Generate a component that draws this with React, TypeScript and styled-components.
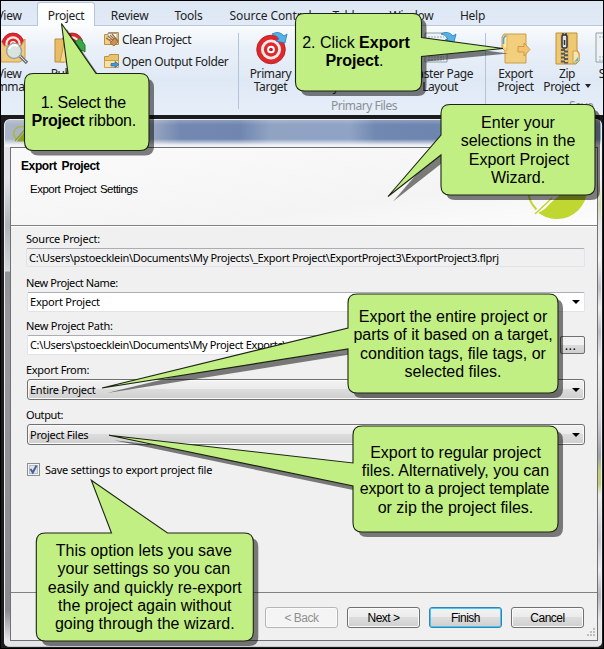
import React from "react";
import styled, { createGlobalStyle } from "styled-components";

const GlobalStyle = createGlobalStyle`
  * { box-sizing: border-box; }
  html, body { margin: 0; padding: 0; overflow: hidden; }
`;

const ribbonFont = `"Noto Sans", "Open Sans", sans-serif`;
const dialogFont = `"Noto Sans", "Open Sans", sans-serif`;
const calloutFont = `"Liberation Sans", Arial, sans-serif`;

const Screen = styled.div`
  position: relative;
  width: 604px;
  height: 649px;
  overflow: hidden;
  background: #1c1c1e;
  border: 1px solid #000;
  display: flex;
  flex-direction: column;
`;

/* ---------- Ribbon ---------- */

const TabBar = styled.nav`
  flex: none;
  height: 25px;
  display: flex;
  align-items: stretch;
  background: linear-gradient(#dde7f4, #e1eaf6);
  border-bottom: 1px solid #b8c9e0;
  font: 12px/30px ${ribbonFont};
  color: #1e1e1e;
`;

const Tab = styled.span<{ $w: number; $ls?: number; $active?: boolean; $shift?: number }>`
  flex: none;
  width: ${(p) => p.$w}px;
  text-align: center;
  text-indent: ${(p) => p.$shift ?? 0}px;
  white-space: nowrap;
  letter-spacing: ${(p) => p.$ls ?? -0.25}px;
  ${(p) =>
    p.$active &&
    `background: linear-gradient(#fff, #fbfcfe);
     border: 1px solid #b4c6de; border-bottom: 0; border-radius: 3px 3px 0 0;
     margin-top: 1px; height: 24px; line-height: 26px; letter-spacing: -0.4px;`}
`;

const RibbonBody = styled.div`
  flex: none;
  height: 89px;
  display: flex;
  padding-top: 7px;
  background: linear-gradient(#fafcfe 0, #e9f0f8 22px, #dfe9f5 54px, #e4edf8 80px, #e6eef7);
  font: 12px/13px ${ribbonFont};
  color: #222;
  overflow: hidden;
`;

const Group = styled.div<{ $w: number }>`
  flex: none;
  width: ${(p) => p.$w}px;
  height: 76px;
  border-right: 1px solid #b3c3d8;
  display: flex;
  flex-direction: column;
  &:last-child { border-right: 0; }
`;

const Tools = styled.div`
  flex: none;
  display: flex;
  height: 65px;
`;

const Tool = styled.div<{ $w: number; $shift?: number }>`
  flex: none;
  width: ${(p) => p.$w}px;
  margin-left: ${(p) => p.$shift ?? 0}px;
  display: flex;
  flex-direction: column;
  align-items: center;
  text-align: center;
  white-space: nowrap;
  letter-spacing: -0.4px;
  svg { flex: none; margin: -2px 0 2px; }
`;

const ToolList = styled.div`
  display: flex;
  flex-direction: column;
  margin-left: 4px;
`;

const ListTool = styled.div<{ $ls: number }>`
  display: flex;
  align-items: center;
  gap: 2px;
  height: 22px;
  margin-top: -5px;
  margin-bottom: 5px;
  letter-spacing: ${(p) => p.$ls}px;
  white-space: nowrap;
`;

const GroupName = styled.div<{ $pad?: number }>`
  line-height: 15px;
  padding-left: ${(p) => p.$pad ?? 0}px;
  color: #8b9097;
  letter-spacing: -0.5px;
`;

const Caret = styled.i`
  display: inline-block;
  border: 3px solid transparent;
  border-top: 4px solid #222;
  border-bottom: 0;
  margin: 0 0 3px 5px;
`;

/* ---------- Wizard window ---------- */

const WizardWindow = styled.section`
  flex: none;
  margin: 4px 0 0 3px;
  width: 598px;
  height: 528px;
  border-radius: 6px 6px 5px 5px;
  padding: 0 5px 6px 5px;
  border: 1px solid #e9edf3;
  border-bottom-color: #c9c9cc;
  background:
    linear-gradient(180deg, transparent 0 26px, #e3e3e5 26px 60px, #b1b4b8 105px, #d5d6d8 150px, #dedede 151px, #929396 152px, #9a9a9c 210px, #8b8b8e 490px, #e5e5e8 520px) 0 0 / 7px 100% no-repeat,
    linear-gradient(180deg, transparent 0 26px, #f4f4f4 26px 60px, #d7dbae 84px, #e8e8e8 108px, #f2f2f4 140px, #c4c4c8 168px, #efeff1 188px, #c0c0c5 212px, #eeeef0 240px, #d2d2d5 300px, #a2a3a8 336px, #c4cd75 352px, #c4cd75 364px, #ececee 375px, #c9c9cd 420px, #ededf0 450px, #b7b7bc 475px, #e7e7ea 500px) 100% 0 / 6px 100% no-repeat,
    #e5e5e8;
  overflow: hidden;
`;

const TitleBar = styled.header`
  height: 27px;
  margin: 0 -5px;
  padding: 5px 0 0 7px;
  background:
    linear-gradient(180deg, rgba(255,255,255,.2) 0, transparent 5px, transparent 19px, rgba(250,250,252,.9) 25px, #f4f4f5 27px),
    linear-gradient(90deg, #aab5c7 0, #9facc2 110px, #9caac2 145px, #7388b1 175px, #7086b0 235px, #90a3c3 265px, #8fa3c4 345px, #7188b1 370px, #6d85af 430px, #8ca0c3 520px, #91a5c6 100%);
`;

const Content = styled.div`
  height: 494px;
  width: 588px;
  border: 1px solid #707173;
  background: #f0f0f0;
  display: flex;
  flex-direction: column;
  font: 11px/14px ${dialogFont};
  color: #000;
`;

const PageHeader = styled.div`
  flex: none;
  height: 78px;
  display: flex;
  justify-content: space-between;
  border-bottom: 1px solid #808183;
  box-shadow: 0 1px #fff;
  background: linear-gradient(172deg, #f9f9f9 20%, #f4f4f4 65%, #fdfdfd);
  font-family: ${calloutFont};
  overflow: hidden;
  svg { margin: 16px 9px 0 0; flex: none; }
`;

const PageTitle = styled.h1`
  margin: 11px 0 0 10px;
  font: bold 12px/14px ${calloutFont};
  letter-spacing: -0.4px;
  word-spacing: 2px;
`;

const PageSubtitle = styled.p`
  margin: 9px 0 0 19px;
  font-size: 11.5px;
  line-height: 14px;
  letter-spacing: -0.5px;
  word-spacing: 1px;
`;

const Form = styled.div`
  flex: none;
  height: 366px;
  padding: 0 12px 0 16px;
`;

const Label = styled.label<{ $h: number; $ls?: number }>`
  display: flex;
  align-items: flex-end;
  height: ${(p) => p.$h}px;
  padding-bottom: 2px;
  margin-left: -1px;
  letter-spacing: ${(p) => p.$ls ?? -0.15}px;
`;

const Box = styled.div<{ $kind: "readonly" | "text" | "combo"; $ls?: number }>`
  display: flex;
  align-items: center;
  justify-content: space-between;
  flex: 1;
  height: ${(p) => (p.$kind === "combo" ? 21 : p.$kind === "text" ? 20 : 19)}px;
  padding: 0 5px 0 2px;
  white-space: nowrap;
  letter-spacing: ${(p) => p.$ls ?? -0.15}px;
  border-radius: 2px;
  border: 1px solid #e2e3ea;
  border-top-color: #abadb3;
  background: ${(p) => (p.$kind === "text" ? "#fff" : "#f0f0f0")};
  ${(p) =>
    p.$kind === "readonly" && `margin-left: -1px;`}
  ${(p) =>
    p.$kind === "combo" &&
    `border: 1px solid #707070; border-radius: 3px; box-shadow: inset 0 0 0 1px #fafafa;
     background: linear-gradient(#f2f2f2 0, #ebebeb 50%, #dcdcdc 50%, #cfcfcf);`}
`;

const DropArrow = styled.i`
  border: 4px solid transparent;
  border-top: 4px solid #000;
  border-bottom: 0;
  margin-right: -1px;
`;

const Row = styled.div`
  display: flex;
`;

const BrowseButton = styled.button`
  width: 25px;
  height: 18px;
  margin: 1px 0 0 5px;
  padding: 0 4px 0 0;
  border: 1px solid #707070;
  border-radius: 2px;
  background: linear-gradient(#f2f2f2 50%, #dcdcdc 50%, #cfcfcf);
  font: 13px/14px ${dialogFont};
  letter-spacing: 0.3px;
`;

const CheckRow = styled.div`
  display: flex;
  align-items: center;
  gap: 5px;
  margin-top: 18px;
  height: 13px;
  letter-spacing: -0.23px;
`;

const Footer = styled.footer`
  flex: 1;
  display: flex;
  justify-content: flex-end;
  align-items: flex-start;
  gap: 9px;
  padding: 14px 0 0;
  border-top: 1px solid #808183;
`;

const Button = styled.button<{ $state?: "disabled" | "default" }>`
  width: 73px;
  height: 21px;
  padding: 0;
  border: 1px solid #707070;
  border-radius: 3px;
  box-shadow: inset 0 0 0 1px #fbfbfb;
  background: linear-gradient(#f3f3f3, #ebebeb 50%, #dddddd 50%, #cfcfcf);
  font: 12px/18px ${calloutFont};
  letter-spacing: -0.5px;
  color: #000;
  ${(p) => p.$state === "disabled" && `border-color: #b5b5b5; background: #f4f4f4; color: #909090;`}
  ${(p) => p.$state === "default" && `border-color: #3c7fb1; box-shadow: inset 0 0 0 1px #3fc9f4;`}
`;

const Grip = styled.div`
  align-self: flex-end;
  width: 4px;
  height: 12px;
  svg { display: block; margin-left: -6px; }
`;

/* ---------- Callouts ---------- */

const CalloutLayer = styled.div`
  position: absolute;
  left: -1px;
  top: -1px;
  width: 604px;
  height: 649px;
`;

const CalloutShapes = styled.svg`
  position: absolute;
  inset: 0;
`;

const CalloutText = styled.div<{ $x: number; $y: number; $w: number }>`
  position: absolute;
  left: ${(p) => p.$x}px;
  top: ${(p) => p.$y}px;
  width: ${(p) => p.$w}px;
  font: 16px/18.35px ${calloutFont};
  color: #000;
  text-align: center;
`;

const Line = styled.div<{ $ls?: number; $dx?: number }>`
  white-space: nowrap;
  letter-spacing: ${(p) => p.$ls ?? 0}px;
  text-indent: ${(p) => p.$dx ?? 0}px;
`;

type Side = "top" | "left" | "right";
interface Bubble {
  x: number; y: number; r: number; b: number;
  side: Side; from: number; to: number; tip: [number, number];
}

const bubblePath = ({ x, y, r, b, side, from, to, tip }: Bubble) => {
  const c = 9;
  const t = `L${tip[0]} ${tip[1]}`;
  return [
    `M${x + c} ${y}`,
    side === "top" ? `H${from}${t}L${to} ${y}` : "",
    `H${r - c}Q${r} ${y} ${r} ${y + c}`,
    side === "right" ? `V${from}${t}L${r} ${to}` : "",
    `V${b - c}Q${r} ${b} ${r - c} ${b}H${x + c}Q${x} ${b} ${x} ${b - c}`,
    side === "left" ? `V${to}${t}L${x} ${from}` : "",
    `V${y + c}Q${x} ${y} ${x + c} ${y}Z`,
  ].join("");
};

interface CalloutData {
  bubble: Bubble;
  textTop: number;
  lines: { text: React.ReactNode; ls?: number; dx?: number }[];
}

const callouts: CalloutData[] = [
  {
    bubble: { x: 24.5, y: 73.5, r: 149, b: 150.5, side: "top", from: 68, to: 96, tip: [61.5, 23.5] },
    textTop: 94,
    lines: [{ text: "1. Select the", ls: -0.3, dx: -7 }, { text: <><b>Project</b> ribbon.</>, ls: -0.2, dx: -6 }],
  },
  {
    bubble: { x: 295.5, y: 13.5, r: 421.5, b: 91, side: "right", from: 37.5, to: 56.5, tip: [503, 48.5] },
    textTop: 34,
    lines: [{ text: <>2. Click <b>Export</b></>, dx: -5 }, { text: <><b>Project</b>.</>, ls: -0.1, dx: -8 }],
  },
  {
    bubble: { x: 441, y: 104.5, r: 595, b: 195, side: "left", from: 135, to: 155, tip: [388, 196.5] },
    textTop: 114,
    lines: [
      { text: "Enter your" }, { text: "selections in the" },
      { text: "Export Project", dx: 2 }, { text: "Wizard." },
    ],
  },
  {
    bubble: { x: 348, y: 294, r: 558, b: 393, side: "left", from: 328, to: 349, tip: [102, 388] },
    textTop: 308,
    lines: [
      { text: "Export the entire project or" }, { text: "parts of it based on a target," },
      { text: "condition tags, file tags, or" }, { text: "selected files." },
    ],
  },
  {
    bubble: { x: 353, y: 426, r: 558, b: 532, side: "left", from: 463, to: 486, tip: [109, 435.3] },
    textTop: 443.5,
    lines: [
      { text: "Export to regular project" }, { text: "files. Alternatively, you can" },
      { text: "export to a project template", ls: -0.15, dx: -2 }, { text: "or zip the project files." },
    ],
  },
  {
    bubble: { x: 36.3, y: 533, r: 253.3, b: 641, side: "top", from: 111.5, to: 167.5, tip: [91.3, 480.3] },
    textTop: 542,
    lines: [
      { text: "This option lets you save", dx: -2 }, { text: "your settings so you can", dx: -2 },
      { text: "easily and quickly re-export" }, { text: "the project again without" },
      { text: "going through the wizard." },
    ],
  },
];

/* ---------- Icons ---------- */

const Rings = ({ cx, cy, r }: { cx: number; cy: number; r: number }) => (
  <>
    <circle cx={cx} cy={cy} r={r} fill="#e0282c" stroke="#a8181c" strokeWidth=".8" />
    <circle cx={cx} cy={cy} r={r * 0.7} fill="#fbe9e8" />
    <circle cx={cx} cy={cy} r={r * 0.5} fill="#dc2b2e" />
    <circle cx={cx} cy={cy} r={r * 0.27} fill="#fff" />
    <circle cx={cx} cy={cy} r={r * 0.13} fill="#c41b20" />
  </>
);

const ViewSummaryIcon = () => (
  <svg width="32" height="34" viewBox="-6 0 32 34" overflow="visible">
    <Rings cx={14} cy={13} r={11} />
    <path d="M1 8l4 7h17l4-7v19l-5 4H2z" fill="#f0cb7b" stroke="#c99d4c" />
    <path d="m21 25 7 7" stroke="#75777d" strokeWidth="3.5" />
    <path d="m21 25 6 6" stroke="#d9dbe0" strokeWidth="1" />
    <circle cx="15" cy="20" r="7.5" fill="#d9e3df" stroke="#9fa29e" strokeWidth="1.5" />
    <path d="M10 18q3-6 9-3" stroke="#fff" strokeWidth="2" fill="none" />
  </svg>
);

const PublishIcon = () => (
  <svg width="32" height="34" viewBox="0 0 32 34">
    <Rings cx={18} cy={13} r={11} />
    <path d="M1 8h9v23H1z" fill="#e9bd66" stroke="#b98c3d" />
    <path d="M10 12h18v16l-4 3H6z" fill="#f6d98f" stroke="#c89c4c" />
    <path d="m20 12 6-5 5 7v7l-3-2-2 2-3-6-3 2z" fill="#39a845" stroke="#217c2d" />
  </svg>
);

const TargetIcon = () => (
  <svg width="36" height="34" viewBox="0 0 36 34">
    <Rings cx={18} cy={18.5} r={14.3} />
    <path d="M19 3q7-4 12 2l3-2-2 9-9-2 3-2q-3-5-7-5z" fill="#57b1e6" stroke="#237cb8" strokeWidth=".8" />
  </svg>
);

const LayoutIcon = () => (
  <svg width="34" height="34" viewBox="0 0 34 34">
    <path d="M2 2h22v29H2z" fill="#eef2f5" stroke="#8ba0a9" />
    <path d="M5 6h16M5 26h16M5 29h16" stroke="#9aacb3" strokeDasharray="2 1" />
    <path d="M18 3q7-4 12 2l3-2-2 8-9-2 3-1q-3-5-7-5z" fill="#57b1e6" stroke="#237cb8" strokeWidth=".8" />
  </svg>
);

const ExportIcon = () => (
  <svg width="34" height="34" viewBox="0 0 34 34">
    <path d="M5 3h22v29H6V20L3 17V6z" fill="#f2cf7d" stroke="#c99d4c" />
    <path d="M4 5h4v12l-3-1z" fill="#fbe8b3" />
    <path d="M4.5 13V9q0-4 3-4" stroke="#4aa9e0" strokeWidth="1.6" fill="none" />
    <path d="M8 3v16l-2 2" stroke="#dcb25d" fill="none" />
    <path d="M19 15.5h6V12l6 6.5-6 6.5v-4h-6z" fill="#f3c46d" stroke="#cf9442" strokeWidth=".9" />
  </svg>
);

const ZipIcon = () => (
  <svg width="30" height="34" viewBox="0 0 30 34">
    <path d="M4 2h21v17l2 3v8l-3 3H4z" fill="#efc972" stroke="#bd913f" />
    <path d="M21 20h4l2 3v7l-3 2h-3z" fill="#fae6ae" stroke="#c99d4c" />
    <path d="m22 31 4-5v4z" fill="#53b7e8" />
    <path d="M9 2v31M16 2v31" stroke="#d6aa55" />
    <path d="M11 18v15" stroke="#55585d" strokeWidth="4" strokeDasharray="2 1.8" />
    <path d="M14 19.5v13" stroke="#55585d" strokeWidth="4" strokeDasharray="2 1.8" />
    <path d="M11 2v4M14 2v4" stroke="#55585d" strokeWidth="2" />
    <rect x="10" y="4" width="5" height="13" rx="1.5" fill="#dfe1e4" stroke="#303238" strokeWidth="1.5" />
    <path d="M12.5 9v5" stroke="#303238" strokeWidth="1.5" />
  </svg>
);

const CleanIcon = () => (
  <svg width="16" height="16" viewBox="0 0 16 16">
    <path d="M.5 3.5h3l1-2h10v12H.5z" fill="#f1d084" stroke="#ba9044" />
    <path d="M4 2.5h9v6H4z" fill="#fff" stroke="#96a5b1" />
    <path d="M2 7l9 6M4 5l8 7M6 4l7 7M8 3l6 7" stroke="#a8703a" strokeWidth="1.3" />
    <path d="m6 12 4 3 4-4-3-4z" fill="#c79254" stroke="#8c592a" strokeWidth=".7" />
  </svg>
);

const OpenFolderIcon = () => (
  <svg width="16" height="16" viewBox="0 0 16 16">
    <path d="M.5 3.5h4l1-2h9v12H.5z" fill="#eac36f" stroke="#ba9044" />
    <path d="M.5 7.5h14v7H.5z" fill="#fae1a0" stroke="#ca9f4d" />
    <path d="M7 10.5h4v-2l4 3-4 3V13H7z" fill="#3a9be0" stroke="#1d68a8" strokeWidth=".7" />
  </svg>
);

const TitleLogo = () => (
  <svg width="18" height="18" viewBox="0 0 18 18">
    <path d="M13 2Q4 0 2 7q-1 5 3 7" fill="none" stroke="#a9b83b" strokeWidth="1.3" />
    <path d="M3 16 15 2M6 16h9V5z" fill="#8fa11c" stroke="#8fa11c" strokeWidth="1.2" />
  </svg>
);

const WizardLogo = () => (
  <svg width="62" height="62" viewBox="0 0 62 62">
    <circle cx="31" cy="25" r="29" fill="none" stroke="#bfd730" strokeWidth="2" />
    <path d="M60 22A30 30 0 0 1 13 49Q28 40 36 20z" fill="#bfd730" />
    <path d="m8 50 24-20" stroke="#fbfbfb" strokeWidth="4" fill="none" />
    <path d="m9 50 17-16" stroke="#bfd730" strokeWidth="1.5" />
  </svg>
);

const CheckBoxIcon = () => (
  <svg width="13" height="13" viewBox="0 0 13 13">
    <rect x=".5" y=".5" width="12" height="12" fill="#f4f4f4" stroke="#8e8f8f" />
    <rect x="2.5" y="2.5" width="8" height="8" fill="#dfe4ea" stroke="#b6bcc5" />
    <path d="m3.5 6 2.3 3.5 3.7-7" fill="none" stroke="#4a5f97" strokeWidth="2" />
  </svg>
);

const GripIcon = () => (
  <svg width="9" height="9" viewBox="0 0 9 9">
    <path d="M6 0h2v2H6zM3 3h2v2H3zM6 3h2v2H6zM0 6h2v2H0zM3 6h2v2H3zM6 6h2v2H6z" fill="#bdbdbd" />
  </svg>
);

export default function App() {
  return (
    <>
      <GlobalStyle />
      <Screen>
        <TabBar>
          <Tab $w={36} $ls={-0.3} $shift={-20}>View</Tab>
          <Tab $w={58} $active>Project</Tab>
          <Tab $w={68} $shift={1}>Review</Tab>
          <Tab $w={51}>Tools</Tab>
          <Tab $w={113} $ls={-0.1}>Source Control</Tab>
          <Tab $w={45}>Tables</Tab>
          <Tab $w={79}>Window</Tab>
          <Tab $w={42} $shift={1}>Help</Tab>
        </TabBar>
        <RibbonBody>
          <Group $w={238}>
            <Tools>
              <Tool $w={50} $shift={-17}><ViewSummaryIcon />View<br />Summary</Tool>
              <Tool $w={60} $shift={6}><PublishIcon />Publish<br />Primary</Tool>
              <ToolList>
                <ListTool $ls={-0.36}><CleanIcon />Clean Project</ListTool>
                <ListTool $ls={-0.37}><OpenFolderIcon />Open Output Folder</ListTool>
              </ToolList>
            </Tools>
          </Group>
          <Group $w={247}>
            <Tools>
              <Tool $w={63}><TargetIcon />Primary<br />Target</Tool>
              <Tool $w={95}><PublishIcon />Primary<br />Stylesheet</Tool>
              <Tool $w={86}><LayoutIcon />Master Page<br />Layout</Tool>
            </Tools>
            <GroupName $pad={92}>Primary Files</GroupName>
          </Group>
          <Group $w={150}>
            <Tools>
              <Tool $w={59}><ExportIcon />Export<br />Project</Tool>
              <Tool $w={44}><ZipIcon />Zip<span>Project<Caret /></span></Tool>
              <Tool $w={44}><LayoutIcon />Save<br />As</Tool>
            </Tools>
            <GroupName $pad={83}>Save</GroupName>
          </Group>
        </RibbonBody>

        <WizardWindow>
          <TitleBar><TitleLogo /></TitleBar>
          <Content>
            <PageHeader>
              <div>
                <PageTitle>Export Project</PageTitle>
                <PageSubtitle>Export Project Settings</PageSubtitle>
              </div>
              <WizardLogo />
            </PageHeader>
            <Form>
              <Label $h={22} $ls={-0.2}>Source Project:</Label>
              <Box $kind="readonly" $ls={-0.31}>
                C:\Users\pstoecklein\Documents\My Projects\_Export Project\ExportProject3\ExportProject3.flprj
              </Box>
              <Label $h={25} $ls={-0.4}>New Project Name:</Label>
              <Box $kind="text" $ls={-0.2}>Export Project<DropArrow /></Box>
              <Label $h={23} $ls={-0.27}>New Project Path:</Label>
              <Row>
                <Box $kind="text" $ls={-0.36}>C:\Users\pstoecklein\Documents\My Project Exports\</Box>
                <BrowseButton>...</BrowseButton>
              </Row>
              <Label $h={24} $ls={-0.3}>Export From:</Label>
              <Box $kind="combo" $ls={-0.25}>Entire Project<DropArrow /></Box>
              <Label $h={24} $ls={-0.4}>Output:</Label>
              <Box $kind="combo" $ls={-0.25}>Project Files<DropArrow /></Box>
              <CheckRow><CheckBoxIcon />Save settings to export project file</CheckRow>
            </Form>
            <Footer>
              <Button $state="disabled">&lt; Back</Button>
              <Button>Next &gt;</Button>
              <Button $state="default">Finish</Button>
              <Button>Cancel</Button>
              <Grip><GripIcon /></Grip>
            </Footer>
          </Content>
        </WizardWindow>

        <CalloutLayer>
          {callouts.map(({ bubble, textTop, lines }) => (
            <React.Fragment key={textTop}>
              <CalloutShapes width="604" height="649">
                <path d={bubblePath(bubble)} transform="translate(5 5)" fill="#000" fillOpacity=".5" />
                <path d={bubblePath(bubble)} fill="#c2ef84" stroke="#1c2413" strokeWidth="1.1" />
              </CalloutShapes>
              <CalloutText $x={bubble.x - 10} $y={textTop} $w={bubble.r - bubble.x + 20}>
                {lines.map((l, i) => (
                  <Line key={i} $ls={l.ls} $dx={l.dx}>{l.text}</Line>
                ))}
              </CalloutText>
            </React.Fragment>
          ))}
        </CalloutLayer>
      </Screen>
    </>
  );
}
